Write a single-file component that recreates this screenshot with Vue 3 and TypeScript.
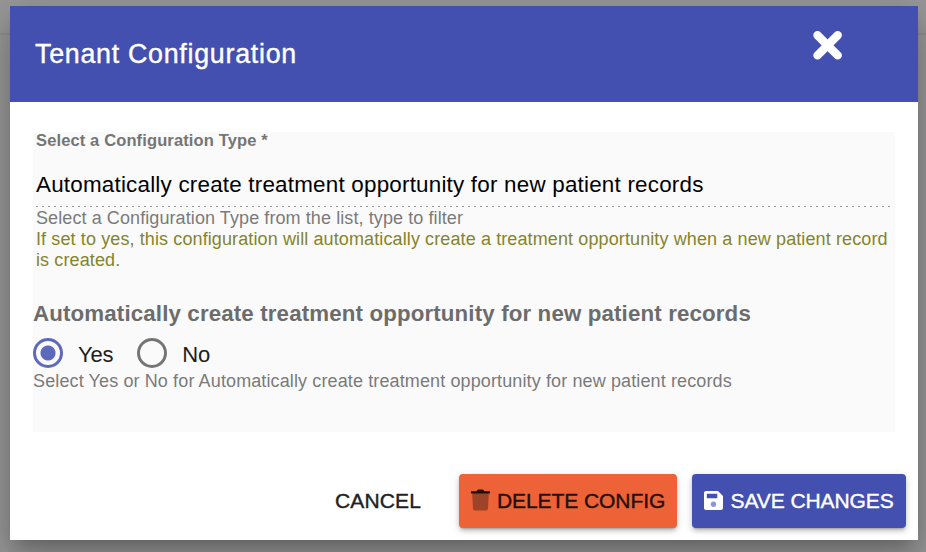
<script setup lang="ts">
import { ref } from 'vue'

const setting = 'Automatically create treatment opportunity for new patient records'
const options = ['Yes', 'No']
const selected = ref('Yes')
</script>

<template>
  <div class="backdrop">
    <div class="toolbar-edge"></div>
    <section class="dialog" role="dialog">
      <header class="header">
        <h1 class="title">Tenant Configuration</h1>
        <button class="close" aria-label="Close">
          <svg width="30" height="30" viewBox="0 0 30 30">
            <path d="M4.500 5.200 24.700 25.400M24.700 5.200 4.500 25.400" stroke="#fff" stroke-width="8.400" stroke-linecap="round" />
          </svg>
        </button>
      </header>
      <main class="content">
        <div class="field">
          <label class="label">Select a Configuration Type *</label>
          <div class="value">{{ setting }}</div>
          <div class="underline"></div>
          <div class="hint">Select a Configuration Type from the list, type to filter</div>
          <div class="description">
            If set to yes, this configuration will automatically create a treatment opportunity when a new patient record<br />is created.
          </div>
        </div>
        <h2 class="setting">{{ setting }}</h2>
        <div class="radios">
          <label v-for="option in options" :key="option" class="radio" @click="selected = option">
            <span class="circle" :class="{ checked: selected === option }"></span>
            <span class="radio-text">{{ option }}</span>
          </label>
        </div>
        <div class="hint radio-hint">Select Yes or No for {{ setting }}</div>
      </main>
      <footer class="actions">
        <button class="button cancel">CANCEL</button>
        <button class="button delete">
          <svg width="19" height="22" viewBox="0 0 19 22">
            <path d="M1.200 4h16.600l-.8 15.400q-.2 2.200-2.200 2.200H4.200Q2.200 21.600 2 19.400z" fill="#9d4327" />
            <path d="M0 2.200h5.600Q6.200.600 7.500.600h4q1.300 0 1.900 1.600H19v2.300H0z" fill="#24100a" />
          </svg>
          <span>DELETE CONFIG</span>
        </button>
        <button class="button save">
          <svg width="19" height="19" viewBox="0 0 19 19">
            <path fill-rule="evenodd" d="M2 0h12L19 5V17q0 2-2 2H2q-2 0-2-2V2Q0 0 2 0zM2.800 2.700v4.500h10.500V2.700z" fill="#fff" />
            <circle cx="9.500" cy="13.200" r="2.700" fill="#8f97d0" />
          </svg>
          <span>SAVE CHANGES</span>
        </button>
      </footer>
    </section>
  </div>
</template>

<style>
body { margin: 0; }
</style>

<style scoped>
* { box-sizing: border-box; }
.backdrop {
  width: 926px;
  height: 552px;
  padding: 6px 8px 12px 10px;
  overflow: hidden;
  position: relative;
  background: #999;
  font-family: "Liberation Sans", Arial, sans-serif;
  white-space: nowrap;
}
.toolbar-edge {
  position: absolute;
  left: 0;
  right: 0;
  top: 33px;
  height: 3px;
  background: linear-gradient(rgba(0, 0, 0, .09), rgba(0, 0, 0, 0));
}
.dialog {
  position: relative;
  height: 534px;
  display: flex;
  flex-direction: column;
  background: #fff;
  box-shadow: 0 11px 15px -7px rgba(0, 0, 0, .2), 0 24px 38px 3px rgba(0, 0, 0, .14), 0 9px 46px 8px rgba(0, 0, 0, .12);
}
.header {
  height: 96px;
  display: flex;
  justify-content: space-between;
  align-items: flex-start;
  padding: 24px 75px 0 25px;
  background: #4350af;
  color: #fff;
}
.title {
  margin: 0;
  font-size: 26.8px;
  line-height: 48px;
  font-weight: 400;
  letter-spacing: .73px;
  -webkit-text-stroke: .4px currentColor;
}
.close {
  width: 30px;
  height: 30px;
  padding: 0;
  border: 0;
  background: none;
}
.close svg { display: block; }
.content {
  height: 300px;
  margin: 30px 23px 0;
  background: #fafafa;
}
.field { padding: 0 4px 0 3px; }
.label {
  display: block;
  font-size: 16.5px;
  line-height: 17px;
  letter-spacing: .13px;
  font-weight: 700;
  color: #757575;
}
.value {
  margin-top: 20px;
  font-size: 22.4px;
  line-height: 32px;
  letter-spacing: .215px;
  color: #000;
}
.underline {
  height: 1px;
  margin-top: 5px;
  background: repeating-linear-gradient(90deg, #949494 0 2px, transparent 2px 6px);
}
.hint {
  padding-top: 1px;
  font-size: 18px;
  line-height: 21px;
  letter-spacing: .09px;
  color: #7a7a7a;
}
.description {
  font-size: 18px;
  line-height: 21px;
  letter-spacing: .112px;
  color: #84842a;
}
.setting {
  margin: 29px 0 0;
  font-size: 22.3px;
  line-height: 28px;
  letter-spacing: .14px;
  font-weight: 700;
  color: #6c6c6c;
}
.radios {
  display: flex;
  gap: 24px;
  height: 32px;
  margin-top: 10px;
}
.radio {
  display: flex;
  gap: 15px;
  height: 30px;
}
.circle {
  width: 30px;
  height: 30px;
  border: 3px solid #757575;
  border-radius: 50%;
}
.circle.checked {
  border-color: #5c69bd;
  background: radial-gradient(circle, #5c69bd 7px, transparent 8px);
}
.radio-text {
  font-size: 22px;
  line-height: 34px;
  letter-spacing: -.2px;
  color: #1c1c1c;
}
.radio-hint { letter-spacing: .12px; }
.actions {
  display: flex;
  justify-content: flex-end;
  margin: 42px 12px 0 0;
}
.button {
  display: flex;
  align-items: center;
  height: 54px;
  padding: 0 12px;
  border: 0;
  border-radius: 4px;
  font: 400 21px/54px "Liberation Sans", Arial, sans-serif;
  letter-spacing: -.08px;
  white-space: nowrap;
  -webkit-text-stroke: .4px currentColor;
}
.cancel {
  margin-right: 26px;
  letter-spacing: .15px;
  background: none;
  color: #212121;
}
.delete {
  width: 218px;
  margin-right: 15px;
  gap: 7px;
  background: #ed6337;
  color: #24100a;
}
.save {
  width: 214px;
  gap: 7.5px;
  background: #4350af;
  color: #fff;
}
.delete, .save {
  box-shadow: 0 3px 2px -2px rgba(0, 0, 0, .2), 0 3px 4px rgba(0, 0, 0, .14), 0 2px 8px rgba(0, 0, 0, .14);
}
.button svg { flex: none; }
.delete svg { margin-bottom: 2px; }
.save svg { margin-bottom: 1px; }
</style>
